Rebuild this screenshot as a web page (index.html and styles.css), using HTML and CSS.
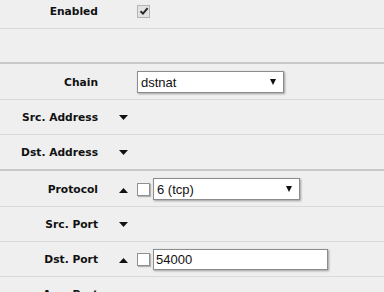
FILE: index.html
```html
<!DOCTYPE html>
<html>
<head>
<meta charset="utf-8">
<link rel="stylesheet" href="styles.css">
</head>
<body>
<div class="form">
  <div class="group">
    <div class="row">
      <div class="lbl">Enabled</div>
      <div class="arr"></div>
      <div class="ctl">
        <span class="cb checked"><svg width="10" height="10" viewBox="0 0 10 10"><path d="M1.5 5.2 L4 7.6 L8.6 2.2" fill="none" stroke="#2a2a2a" stroke-width="2"/></svg></span>
      </div>
    </div>
    <div class="row empty"></div>
  </div>
  <div class="group">
    <div class="row">
      <div class="lbl">Chain</div>
      <div class="arr"></div>
      <div class="ctl">
        <div class="sel"><span>dstnat</span><svg width="6" height="6" viewBox="0 0 6 6"><polygon points="0,0 6,0 3,6" fill="#111"/></svg></div>
      </div>
    </div>
    <div class="row">
      <div class="lbl">Src. Address</div>
      <div class="arr"><svg width="9" height="5" viewBox="0 0 9 5"><polygon points="0,0 9,0 4.5,5" fill="#111"/></svg></div>
      <div class="ctl"></div>
    </div>
    <div class="row">
      <div class="lbl">Dst. Address</div>
      <div class="arr"><svg width="9" height="5" viewBox="0 0 9 5"><polygon points="0,0 9,0 4.5,5" fill="#111"/></svg></div>
      <div class="ctl"></div>
    </div>
  </div>
  <div class="group">
    <div class="row">
      <div class="lbl">Protocol</div>
      <div class="arr up"><svg width="9" height="5" viewBox="0 0 9 5"><polygon points="0,5 9,5 4.5,0" fill="#111"/></svg></div>
      <div class="ctl">
        <span class="cb"></span>
        <div class="sel"><span>6 (tcp)</span><svg width="6" height="6" viewBox="0 0 6 6"><polygon points="0,0 6,0 3,6" fill="#111"/></svg></div>
      </div>
    </div>
    <div class="row">
      <div class="lbl">Src. Port</div>
      <div class="arr"><svg width="9" height="5" viewBox="0 0 9 5"><polygon points="0,0 9,0 4.5,5" fill="#111"/></svg></div>
      <div class="ctl"></div>
    </div>
    <div class="row">
      <div class="lbl">Dst. Port</div>
      <div class="arr up"><svg width="9" height="5" viewBox="0 0 9 5"><polygon points="0,5 9,5 4.5,0" fill="#111"/></svg></div>
      <div class="ctl">
        <span class="cb"></span>
        <div class="inp">54000</div>
      </div>
    </div>
    <div class="row">
      <div class="lbl">Any. Port</div>
      <div class="arr"><svg width="9" height="5" viewBox="0 0 9 5"><polygon points="0,0 9,0 4.5,5" fill="#111"/></svg></div>
      <div class="ctl"></div>
    </div>
  </div>
</div>
</body>
</html>
```
FILE: styles.css
```css
html, body {
  margin: 0;
  padding: 0;
  background: #efefef;
  overflow: hidden;
}
body {
  font-family: "DejaVu Sans", Verdana, sans-serif;
  color: #111;
}
.form {
  margin-top: -6px;
}
.group + .group {
  border-top: 2px solid #c8c8c8;
  padding-top: 1px;
}
.row {
  height: 34px;
  display: flex;
  align-items: center;
  border-bottom: 1px solid #dadada;
}
.row:last-child {
  border-bottom: none;
}
.row.empty {
  height: 33px;
}
.lbl {
  width: 98px;
  flex: none;
  text-align: right;
  font-weight: bold;
  font-size: 10.7px;
  white-space: nowrap;
}
.arr {
  width: 9px;
  flex: none;
  margin-left: 21px;
  margin-right: 9px;
  height: 5px;
  display: flex;
}
.arr.up {
  margin-top: 2px;
}
.ctl {
  display: flex;
  align-items: center;
  font-family: "Liberation Sans", Arial, sans-serif;
  font-size: 13px;
  color: #111;
}
.cb {
  width: 13px;
  height: 13px;
  box-sizing: border-box;
  background: #fff;
  border: 1px solid #8f8f8f;
  box-shadow: 1px 1px 1px rgba(0,0,0,0.25);
  margin-right: 3px;
  display: flex;
  align-items: center;
  justify-content: center;
}
.cb.checked {
  background: #e3e3e3;
  border-color: #b4b4b4;
  box-shadow: none;
}
.sel {
  width: 147px;
  height: 22px;
  box-sizing: border-box;
  background: #fff;
  border: 1px solid #8c8c8c;
  box-shadow: 1px 1px 2px rgba(0,0,0,0.35);
  display: flex;
  align-items: center;
  justify-content: space-between;
  padding: 0 7px 0 3px;
}
.inp {
  width: 175px;
  height: 21px;
  box-sizing: border-box;
  background: #fff;
  border: 1px solid #8c8c8c;
  box-shadow: 1px 1px 2px rgba(0,0,0,0.35);
  display: flex;
  align-items: center;
  padding: 0 2px;
}
```
